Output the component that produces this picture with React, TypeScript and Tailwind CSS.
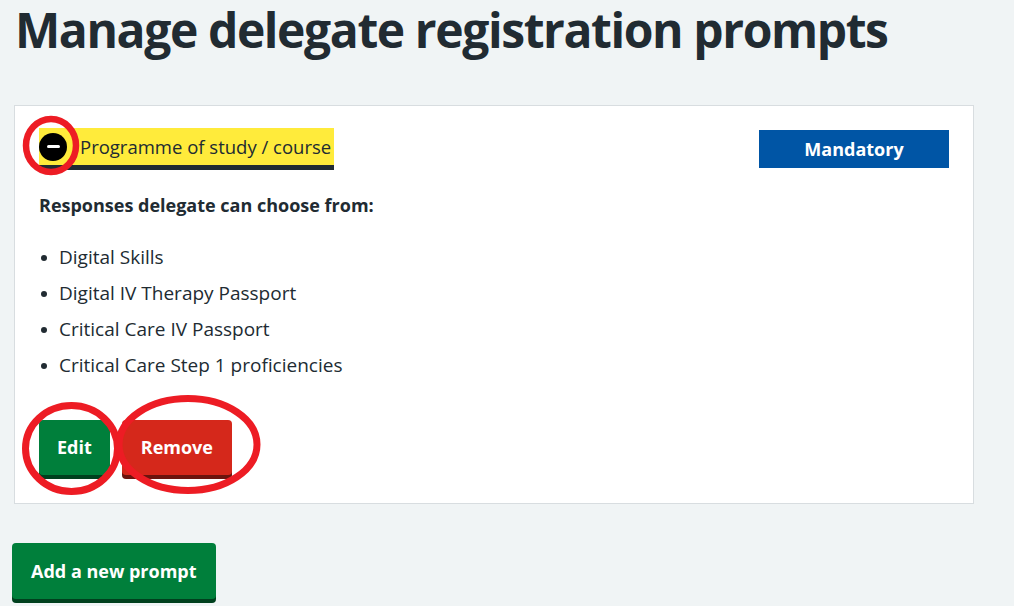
import React from "react";

const items = [
  "Digital Skills",
  "Digital IV Therapy Passport",
  "Critical Care IV Passport",
  "Critical Care Step 1 proficiencies",
];

export default function App() {
  return (
    <div
      className="relative min-h-[606px] w-[1014px] overflow-hidden bg-[#f0f4f5] text-[#212b32]"
      style={{ fontFamily: '"Open Sans", "Noto Sans", Arial, sans-serif' }}
    >
      <h1 className="pl-[15px] pt-0 text-[48px] font-bold leading-[60px] tracking-[-1.4px]">
        Manage delegate registration prompts
      </h1>

      <div className="mx-[14px] mt-[45px] w-[960px] border border-[#d8dde0] bg-white px-[24px] pb-[28px] pt-[22px]">
        <div className="flex items-start justify-between">
          <div className="flex items-center border-b-[5px] border-[#212b32] bg-[#ffeb3b] pr-[3px]">
            <div className="flex h-[37px] w-[41px] items-center justify-start">
              <div className="flex h-[28px] w-[28px] items-center justify-center rounded-full bg-black">
                <div className="h-[3px] w-[13px] rounded-sm bg-white" />
              </div>
            </div>
            <span className="text-[18.5px] leading-[37px]">Programme of study / course</span>
          </div>
          <div className="mt-[2px] flex h-[38px] w-[190px] items-center justify-center bg-[#0055a5] text-[18px] font-bold text-white">
            Mandatory
          </div>
        </div>

        <p className="mt-[23px] text-[18px] font-bold leading-[24px]">
          Responses delegate can choose from:
        </p>

        <ul className="mt-[28px] flex flex-col gap-[12px] pl-[20px]">
          {items.map((t) => (
            <li key={t} className="relative text-[19px] leading-[24px]">
              <span className="absolute left-[-18px] top-[10px] h-[6px] w-[6px] rounded-full bg-[#212b32]" />
              {t}
            </li>
          ))}
        </ul>

        <div className="mt-[43px] flex gap-[12px]">
          <button className="h-[55px] rounded-[4px] bg-[#007f3b] px-[18px] text-[18px] font-bold text-white shadow-[0_4px_0_#00401e]">
            Edit
          </button>
          <button className="h-[55px] rounded-[4px] bg-[#d5281b] px-[19px] text-[18px] font-bold text-white shadow-[0_4px_0_#6b140e]">
            Remove
          </button>
        </div>
      </div>

      <button className="ml-[12px] mt-[39px] h-[56px] rounded-[4px] bg-[#007f3b] px-[19px] text-[18px] font-bold text-white shadow-[0_4px_0_#00401e]">
        Add a new prompt
      </button>

      <svg className="pointer-events-none absolute left-0 top-0" width="1014" height="606">
        <ellipse cx="51" cy="145.5" rx="25" ry="26.5" fill="none" stroke="#ed1c24" strokeWidth="6.5" />
        <ellipse cx="71.5" cy="448.5" rx="46" ry="43" fill="none" stroke="#ed1c24" strokeWidth="7" />
        <ellipse cx="188" cy="444.5" rx="69" ry="46" fill="none" stroke="#ed1c24" strokeWidth="7" />
      </svg>
    </div>
  );
}
